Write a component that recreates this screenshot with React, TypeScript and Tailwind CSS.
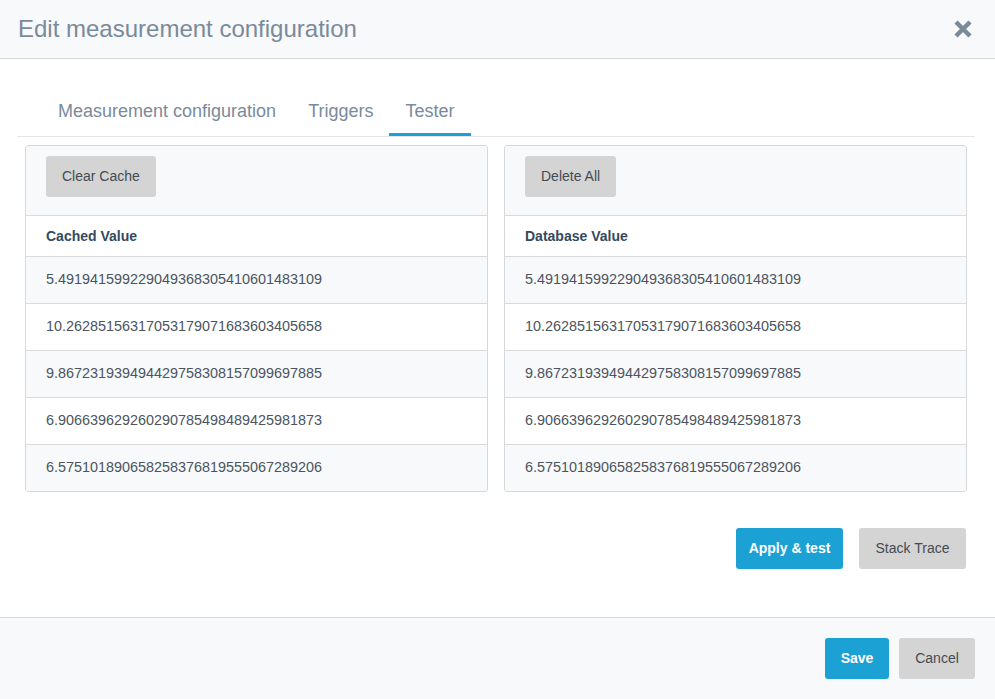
import React from "react";

const cached = [
  "5.491941599229049368305410601483109",
  "10.26285156317053179071683603405658",
  "9.867231939494429758308157099697885",
  "6.906639629260290785498489425981873",
  "6.575101890658258376819555067289206",
];

function GrayButton({ children, className = "" }: { children: React.ReactNode; className?: string }) {
  return (
    <button
      className={`h-[41px] rounded-[3px] bg-[#d4d4d4] text-[14px] text-[#444b52] ${className}`}
    >
      {children}
    </button>
  );
}

function BlueButton({ children, className = "" }: { children: React.ReactNode; className?: string }) {
  return (
    <button
      className={`h-[41px] rounded-[3px] bg-[#1ba1d3] text-[14px] font-bold text-white ${className}`}
    >
      {children}
    </button>
  );
}

function ValuePanel({ action, title, values }: { action: string; title: string; values: string[] }) {
  return (
    <div className="flex-1 overflow-hidden rounded-[3px] border border-[#d6d8da]">
      <div className="h-[69px] bg-[#f8f9fa] px-5 pt-[10px]">
        <GrayButton className="px-4">{action}</GrayButton>
      </div>
      <div className="flex h-[41px] items-center border-t border-[#d9dadb] bg-white px-5 text-[14px] font-bold text-[#34495e]">
        {title}
      </div>
      {values.map((v, i) => (
        <div
          key={i}
          className={`flex h-[47px] items-center border-t border-[#d9dadb] px-5 text-[14.4px] text-[#4b5560] ${
            i % 2 === 0 ? "bg-[#f8f9fa]" : "bg-white"
          }`}
        >
          {v}
        </div>
      ))}
    </div>
  );
}

export default function App() {
  return (
    <div
      className="flex h-[699px] w-[995px] flex-col bg-white"
      style={{ fontFamily: '"Liberation Sans", Arial, sans-serif' }}
    >
      <header className="flex h-[59px] items-center justify-between border-b border-[#d5d8db] bg-[#f7f9fa] pl-[18px] pr-[22px]">
        <h1 className="text-[24px] text-[#7a8a9b]">Edit measurement configuration</h1>
        <svg width="20" height="20" viewBox="0 0 20 20">
          <path d="M3 3L17 17M17 3L3 17" stroke="#7a8a9b" strokeWidth="4.5" strokeLinecap="butt" />
        </svg>
      </header>

      <main className="flex-1 pl-[17px] pr-[20px]">
        <nav className="mt-[29px] flex border-b border-[#e3e5e7] pl-[25px]">
          {["Measurement configuration", "Triggers", "Tester"].map((t) => (
            <div
              key={t}
              className={`px-4 pb-[8px] pt-[10px] text-[18px] text-[#7a8a9b] ${
                t === "Tester" ? "border-b-[3px] border-[#1ba1d3]" : "border-b-[3px] border-transparent"
              }`}
            >
              {t}
            </div>
          ))}
        </nav>

        <div className="mt-2 flex gap-4 px-2">
          <ValuePanel action="Clear Cache" title="Cached Value" values={cached} />
          <ValuePanel action="Delete All" title="Database Value" values={cached} />
        </div>

        <div className="mt-9 flex justify-end gap-4 pr-[9px]">
          <BlueButton className="w-[107px]">Apply &amp; test</BlueButton>
          <GrayButton className="w-[107px]">Stack Trace</GrayButton>
        </div>
      </main>

      <footer className="flex h-[82px] items-start justify-end gap-[10px] border-t border-[#d5d8db] bg-[#f7f9fa] pr-5 pt-5">
        <BlueButton className="w-[64px]">Save</BlueButton>
        <GrayButton className="w-[76px] font-normal">Cancel</GrayButton>
      </footer>
    </div>
  );
}
